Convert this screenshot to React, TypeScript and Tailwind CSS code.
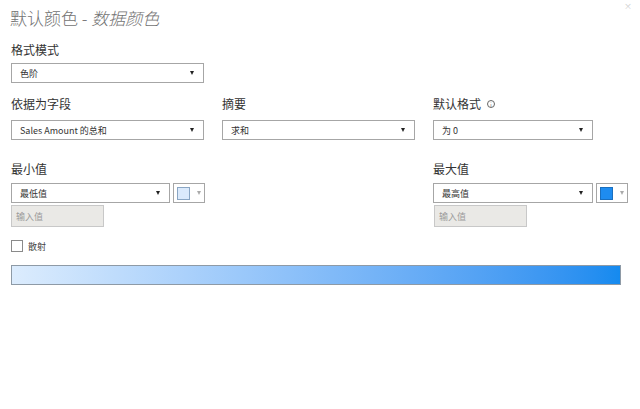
import React from 'react';

const font = { fontFamily: '"Noto Sans CJK SC", "Liberation Sans", sans-serif' };

function Arrow({ className }: { className: string }) {
  return <span className={`h-0 w-0 border-l-[2px] border-r-[2px] border-t-[4px] border-l-transparent border-r-transparent ${className}`} />;
}

function Select({ value, className }: { value: string; className: string }) {
  return (
    <div className={`flex h-[20px] items-center justify-between border border-[#a6a6a6] bg-white pl-[8px] pr-[9px] ${className}`}>
      <span className="text-[9px] leading-none text-[#333]">{value}</span>
      <Arrow className="border-t-[#222]" />
    </div>
  );
}

function Swatch({ color, border }: { color: string; border: string }) {
  return (
    <div className="ml-[3px] flex h-[20px] w-[32px] items-center gap-[7px] border border-[#a6a6a6] bg-white pl-[3px]">
      <div className={`h-[13px] w-[13px] border ${color} ${border}`} />
      <Arrow className="border-t-[#aaa]" />
    </div>
  );
}

function ValueInput({ className }: { className: string }) {
  return (
    <div className={`mt-[2px] flex h-[22px] w-[93px] items-center border border-[#c8c8c8] bg-[#eae9e6] pl-[4px] ${className}`}>
      <span className="text-[9px] leading-none text-[#9a9a9a]">输入值</span>
    </div>
  );
}

export default function App() {
  return (
    <div className="relative h-[409px] w-[640px] overflow-hidden bg-white" style={font}>
      {/* 标题 */}
      <div className="pl-[10px] pt-[5px] text-[17px] font-light leading-[26px] text-[#727272]">
        默认颜色 - <span className="italic">数据颜色</span>
      </div>
      <span className="absolute right-[8px] top-[2px] text-[8px] leading-none text-[#ccc]">×</span>

      <div className="pl-[11px]">
        {/* 格式模式 */}
        <div className="mt-[10px] text-[12px] leading-[18px] text-[#333]">格式模式</div>
        <Select value="色阶" className="mt-[4px] w-[193px]" />

        {/* 字段 / 摘要 / 默认格式 */}
        <div className="mt-[12px] grid grid-cols-[211px_211px_211px]">
          <div>
            <div className="text-[12px] leading-[18px] text-[#333]">依据为字段</div>
            <Select value="Sales Amount 的总和" className="mt-[7px] w-[193px]" />
          </div>
          <div>
            <div className="text-[12px] leading-[18px] text-[#333]">摘要</div>
            <Select value="求和" className="mt-[7px] w-[193px]" />
          </div>
          <div>
            <div className="flex items-center gap-[6px] text-[12px] leading-[18px] text-[#333]">
              默认格式
              <span className="flex h-[8px] w-[8px] items-center justify-center rounded-full border border-[#666] text-[5px] leading-none text-[#666]">i</span>
            </div>
            <Select value="为 0" className="mt-[7px] w-[160px]" />
          </div>
        </div>

        {/* 最小值 / 最大值 */}
        <div className="mt-[20px] grid grid-cols-[422px_211px]">
          <div>
            <div className="text-[12px] leading-[18px] text-[#333]">最小值</div>
            <div className="mt-[5px] flex">
              <Select value="最低值" className="w-[159px]" />
              <Swatch color="bg-[#dbeafc]" border="border-[#8aa6c4]" />
            </div>
            <ValueInput className="" />
          </div>
          <div>
            <div className="text-[12px] leading-[18px] text-[#333]">最大值</div>
            <div className="mt-[5px] flex">
              <Select value="最高值" className="w-[160px]" />
              <Swatch color="bg-[#1e8cf0]" border="border-[#1a6fbf]" />
            </div>
            <ValueInput className="ml-[1px]" />
          </div>
        </div>

        {/* 散射 */}
        <div className="mt-[13px] flex items-center gap-[5px]">
          <div className="h-[12px] w-[12px] border border-[#8a8a8a] bg-white" />
          <span className="text-[9px] leading-none text-[#444]">散射</span>
        </div>

        {/* 渐变条 */}
        <div className="mt-[13px] h-[20px] w-[610px] border border-[#8e9aa6] bg-gradient-to-r from-[#dcecfd] to-[#148aef]" />
      </div>
    </div>
  );
}
